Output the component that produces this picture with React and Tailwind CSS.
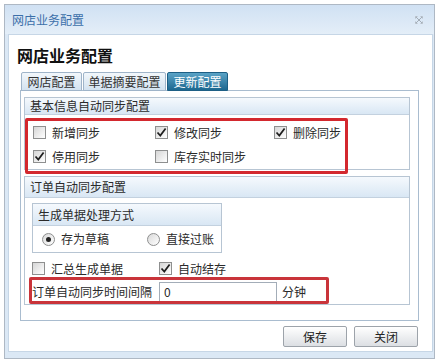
import React from 'react';

const Check = ({ checked }) => (
  <span className="w-[13px] h-[13px] shrink-0 border border-[#8e8f8f] bg-gradient-to-br from-[#d6d6d6] to-white flex items-center justify-center">
    {checked && (
      <svg width="11" height="11" viewBox="0 0 11 11">
        <path d="M1.5 5.5 L4.3 8.6 L9.6 1.4" stroke="#1e1e1e" strokeWidth="1.7" fill="none" />
      </svg>
    )}
  </span>
);

const Radio = ({ on }) => (
  <span className="w-[13px] h-[13px] shrink-0 rounded-full border border-[#8e8f8f] bg-gradient-to-br from-[#d9d9d9] to-white flex items-center justify-center">
    {on && <span className="w-[5px] h-[5px] rounded-full bg-[#222]" />}
  </span>
);

const Item = ({ checked, label, w }) => (
  <div className={`flex items-center gap-[6px] ${w}`}>
    <Check checked={checked} />
    <span>{label}</span>
  </div>
);

const GroupHead = ({ children, h }) => (
  <div className={`${h} flex items-center pl-[5px] border-b border-[#c3d1df] bg-gradient-to-b from-[#f5f9fd] to-[#d9e7f4]`}>
    {children}
  </div>
);

const Tab = ({ label, active, w }) => (
  <div
    className={`${w} h-[19px] flex items-center justify-center rounded-t-[2px] border ${
      active
        ? 'bg-gradient-to-b from-[#5aa3c6] to-[#1c6890] border-[#1d5f85] text-white'
        : 'bg-gradient-to-b from-[#f2f7fb] to-[#d3e2f0] border-[#9fb4c9] text-[#333]'
    }`}
  >
    {label}
  </div>
);

const Button = ({ label }) => (
  <button className="w-[64px] h-[21px] rounded-[2px] border border-[#9da3aa] bg-gradient-to-b from-white to-[#dcdfe3] text-[12px] text-[#222]">
    {label}
  </button>
);

export default function App() {
  return (
    <div className="relative w-[439px] h-[363px] bg-white pt-[4px] pl-[4px] text-[12px] leading-none text-[#2a2a2a] font-['Noto_Sans_CJK_SC',sans-serif]">
      <div className="w-[431px] h-[355px] border border-[#aeb8c4] bg-[#dbe8f5] flex flex-col">
        {/* title bar */}
        <div className="h-[29px] shrink-0 flex items-center justify-between pl-[7px] pr-[11px] bg-gradient-to-b from-[#d0e1f3] to-[#e4eef8] text-[#3b6fa9]">
          <span>网店业务配置</span>
          <svg width="8" height="8" viewBox="0 0 8 8">
            <path d="M1 1 L7 7 M7 1 L1 7" stroke="#a3adb7" strokeWidth="1" />
            <path d="M0.5 0.5 h2 M0.5 0.5 v2 M7.5 0.5 h-2 M7.5 0.5 v2 M0.5 7.5 h2 M0.5 7.5 v-2 M7.5 7.5 h-2 M7.5 7.5 v-2" stroke="#b4bdc6" strokeWidth="1" />
          </svg>
        </div>

        {/* body */}
        <div className="ml-[3px] mr-[1px] h-[318px] bg-white border border-[#c6d6e6] flex flex-col">
          <div className="pl-[8px] pt-[11px] h-[29px] text-[16px] leading-[18px] font-bold text-[#111]">网店业务配置</div>

          <div className="mt-[8px] ml-[12px] flex gap-[1px] relative z-10">
            <Tab label="网店配置" w="w-[61px]" />
            <Tab label="单据摘要配置" w="w-[83px]" />
            <Tab label="更新配置" w="w-[61px]" active />
          </div>

          <div className="ml-[11px] -mt-[1px] w-[399px] h-[231px] border border-[#a9bccf] pl-[3px] pt-[6px] flex flex-col gap-[6px]">
            {/* group 1 */}
            <div className="w-[386px] h-[73px] border border-[#b7c5d3] flex flex-col">
              <GroupHead h="h-[17px]">基本信息自动同步配置</GroupHead>
              <div className="pl-[8px] pt-[11px] flex flex-col gap-[11px]">
                <div className="flex">
                  <Item label="新增同步" w="w-[122px]" />
                  <Item label="修改同步" checked w="w-[119px]" />
                  <Item label="删除同步" checked />
                </div>
                <div className="flex">
                  <Item label="停用同步" checked w="w-[122px]" />
                  <Item label="库存实时同步" />
                </div>
              </div>
            </div>

            {/* group 2 */}
            <div className="w-[386px] h-[129px] border border-[#b7c5d3] flex flex-col">
              <GroupHead h="h-[21px]">订单自动同步配置</GroupHead>
              <div className="ml-[7px] mt-[5px] w-[190px] h-[50px] border border-[#b7c5d3] flex flex-col">
                <GroupHead h="h-[22px]">生成单据处理方式</GroupHead>
                <div className="flex-1 flex items-center pl-[9px]">
                  <div className="flex items-center gap-[6px] w-[105px]">
                    <Radio on />
                    <span>存为草稿</span>
                  </div>
                  <div className="flex items-center gap-[6px]">
                    <Radio />
                    <span>直接过账</span>
                  </div>
                </div>
              </div>
              <div className="pl-[7px] mt-[9px] flex">
                <Item label="汇总生成单据" w="w-[127px]" />
                <Item label="自动结存" checked />
              </div>
              <div className="pl-[7px] mt-[7px] flex items-center">
                <span className="w-[127px]">订单自动同步时间间隔</span>
                <div className="w-[118px] h-[20px] border border-[#a3adb8] flex items-center pl-[4px]">0</div>
                <span className="ml-[5px]">分钟</span>
              </div>
            </div>
          </div>

          <div className="mt-[5px] mr-[14px] flex justify-end gap-[7px]">
            <Button label="保存" />
            <Button label="关闭" />
          </div>
        </div>
      </div>

      {/* red annotation boxes */}
      <div className="absolute left-[25px] top-[118px] w-[323px] h-[56px] border-[3px] border-[#d3282e] rounded-[2px] pointer-events-none" />
      <div className="absolute left-[29px] top-[277px] w-[300px] h-[27px] border-[3px] border-[#c9343a] rounded-[2px] pointer-events-none" />
    </div>
  );
}
